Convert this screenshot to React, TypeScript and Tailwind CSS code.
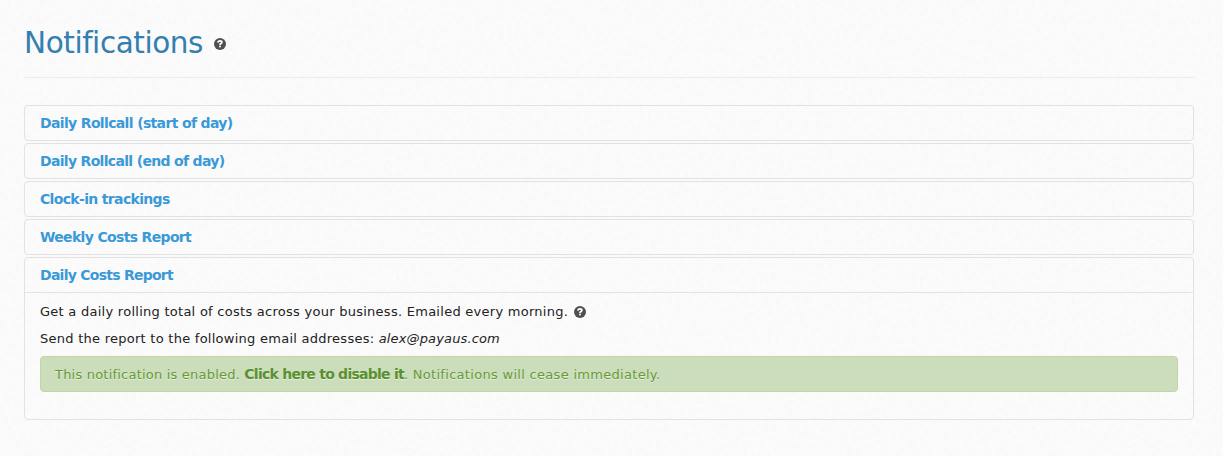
import React from "react";

function HelpIcon({ className }: { className?: string }) {
  return (
    <svg viewBox="0 0 12 12" className={`h-3 w-3 shrink-0 ${className ?? ""}`}>
      <circle cx="6" cy="6" r="6" fill="#505050" />
      <path d="M4 4.6C4.1 3.3 4.9 2.8 6 2.8C7.2 2.8 7.9 3.4 7.9 4.3C7.9 5.6 6 5.5 6 7" fill="none" stroke="#fff" strokeWidth="1.8" />
      <rect x="5.1" y="7.7" width="1.8" height="1.6" fill="#fff" />
    </svg>
  );
}

function Texture() {
  return (
    <svg className="absolute inset-0 h-full w-full" aria-hidden="true">
      <filter id="paper" x="0" y="0" width="100%" height="100%">
        <feTurbulence type="fractalNoise" baseFrequency="0.25" numOctaves="2" seed="4" />
        <feColorMatrix values="0 0 0 0 1  0 0 0 0 1  0 0 0 0 1  2 0 0 0 -0.6" />
      </filter>
      <rect width="100%" height="100%" filter="url(#paper)" opacity="0.5" />
    </svg>
  );
}

const titles = [
  { text: "Daily Rollcall (start of day)", spacing: "tracking-[-0.65px]" },
  { text: "Daily Rollcall (end of day)", spacing: "tracking-[-0.68px]" },
  { text: "Clock-in trackings", spacing: "tracking-[-0.66px]" },
  { text: "Weekly Costs Report", spacing: "tracking-[-0.66px]" },
];

function PanelTitle({ text, spacing }: { text: string; spacing: string }) {
  return (
    <div className="flex h-[34px] items-center px-[15px] text-sm font-bold text-[#3a99d8]">
      <a href="#" className={spacing}>{text}</a>
    </div>
  );
}

export default function App() {
  return (
    <main className="relative h-[456px] w-[1223px] overflow-hidden bg-[#f9f9f9] font-['DejaVu_Sans',Verdana,sans-serif] text-[13px] leading-[18px] text-[#222]">
      <Texture />
      <div className="relative ml-6 w-[1170px]">
        <header className="flex h-[78px] items-center border-b border-[#ececec] pt-[7px]">
          <h1 className="w-[179px] pt-0.5 text-[29.5px] leading-10 tracking-[-0.43px] text-[#337fb0]">Notifications</h1>
          <HelpIcon className="ml-[11px] mt-1" />
        </header>
        <div className="mt-[27px] flex flex-col gap-0.5">
          {titles.map((t) => (
            <section key={t.text} className="h-9 rounded border border-[#e2e2e2]">
              <PanelTitle text={t.text} spacing={t.spacing} />
            </section>
          ))}
          <section className="h-[163px] rounded border border-[#e2e2e2]">
            <PanelTitle text="Daily Costs Report" spacing="tracking-[-0.74px]" />
            <div className="border-t border-[#e2e2e2] px-[15px] pt-2.5">
              <p className="flex items-center whitespace-nowrap">
                <span className="tracking-[0.265px]">Get a daily rolling total of costs across your business. Emailed every morning.</span>
                <HelpIcon className="ml-1.5" />
              </p>
              <p className="mt-[9px] whitespace-nowrap tracking-[0.26px]">
                Send the report to the following email addresses: <em className="tracking-[0.14px]">alex@payaus.com</em>
              </p>
              <div className="mt-2 flex h-9 items-center whitespace-pre rounded border border-[#c1d5a5] bg-[#ccddbc] px-[14px] pt-0.5 text-[#659b35] [text-shadow:0_1px_0_rgba(255,255,255,0.5)]">
                <span className="tracking-[0.21px]">This notification is enabled. </span>
                <a href="#" className="pb-0.5 text-sm leading-[18px] font-bold tracking-[-0.75px] text-[#5b9030]">Click here to disable it</a>
                <span className="tracking-[0.3px]">. Notifications will cease immediately.</span>
              </div>
            </div>
          </section>
        </div>
      </div>
    </main>
  );
}
